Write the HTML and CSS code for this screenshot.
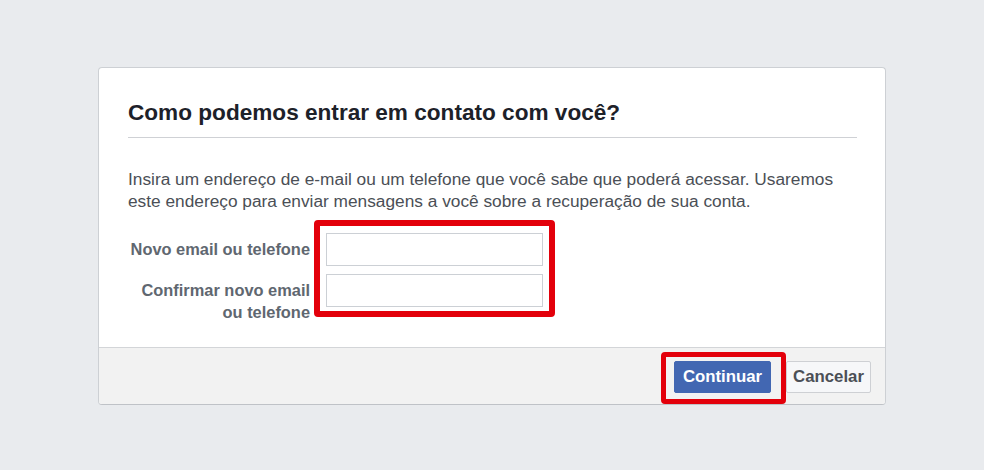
FILE: index.html
```html
<!DOCTYPE html>
<html>
<head>
<meta name="viewport" content="width=device-width, initial-scale=1">
<link rel="stylesheet" href="styles.css">
</head>
<body>

<div class="card">
    <div class="cardHeader">
        <h2 class="title">Como podemos entrar em contato com você?</h2>
    </div>

    <div class="cardBody">
        <p class="intro">Insira um endereço de e-mail ou um telefone que você sabe que poderá acessar. Usaremos este endereço para enviar mensagens a você sobre a recuperação de sua conta.</p>

        <div class="form">
            <label class="fieldLabel" for="newContact">Novo email ou telefone</label>
            <div class="fieldCell">
                <input type="text" id="newContact" class="textInput">
                <span class="highlight fieldsHighlight"></span>
            </div>
            <label class="fieldLabel" for="confirmContact">Confirmar novo email ou telefone</label>
            <div class="fieldCell">
                <input type="text" id="confirmContact" class="textInput">
            </div>
        </div>
    </div>

    <div class="cardFooter">
        <span class="btnWrap">
            <button class="btn primaryBtn">Continuar</button>
            <span class="highlight buttonHighlight"></span>
        </span>
        <button class="btn cancelBtn">Cancelar</button>
    </div>
</div>

</body>
</html>
```

FILE: styles.css
```css
/* Page */
body {
    margin: 0;
    background: #e9ebee;
    font-family: "Liberation Sans", Arial, sans-serif;
}

* {
    box-sizing: border-box;
}

/* The dialog card */
.card {
    width: 788px;
    margin: 67px auto 0;
    background: #fff;
    border: 1px solid #cdd0d4;
    border-bottom-color: #bfc2c7;
    border-radius: 4px;
    overflow: hidden;
}

.cardHeader {
    margin: 0 28px 0 29px;
    padding: 32px 0 11px;
    border-bottom: 1px solid #cfd1d5;
}

.title {
    margin: 0;
    font-size: 22.6px;
    line-height: 26px;
    font-weight: bold;
    color: #1d2129;
}

.cardBody {
    padding: 30px 29px 24px;
}

.intro {
    margin: 0 0 21px;
    font-size: 17.3px;
    line-height: 22px;
    color: #4b4f56;
}

/* Label / input grid */
.form {
    display: grid;
    grid-template-columns: 182px 217px;
    column-gap: 16px;
    row-gap: 8px;
}

.fieldLabel {
    padding-top: 5px;
    font-size: 16.4px;
    line-height: 22px;
    font-weight: bold;
    color: #606770;
    text-align: right;
}

.fieldCell {
    position: relative;
}

.textInput {
    display: block;
    width: 217px;
    height: 33px;
    margin: 0;
    border: 1px solid #ccd0d5;
    background: #fff;
}

/* Footer with the buttons */
.cardFooter {
    display: flex;
    justify-content: flex-end;
    gap: 15px;
    padding: 13px 14px 11px;
    background: #f2f2f2;
    border-top: 1px solid #d3d5d8;
}

.btnWrap {
    position: relative;
}

.btn {
    height: 32px;
    margin: 0;
    padding: 0;
    border-radius: 2px;
    font-family: "Liberation Sans", Arial, sans-serif;
    font-size: 16.8px;
    font-weight: bold;
    cursor: pointer;
}

.primaryBtn {
    width: 97px;
    background: #4267b2;
    border: 1px solid #4267b2;
    color: #fff;
}

.cancelBtn {
    width: 85px;
    background: #f6f7f9;
    border: 1px solid #ced0d4;
    color: #4b4f56;
}

/* Red annotation boxes drawn over the screenshot */
.highlight {
    position: absolute;
    border: 6px solid #e3000b;
    border-radius: 4px;
    pointer-events: none;
}

.fieldsHighlight {
    left: -12px;
    top: -13px;
    width: 241px;
    height: 97px;
}

.buttonHighlight {
    left: -13px;
    top: -9px;
    width: 125px;
    height: 52px;
    border-width: 5px;
}
```
